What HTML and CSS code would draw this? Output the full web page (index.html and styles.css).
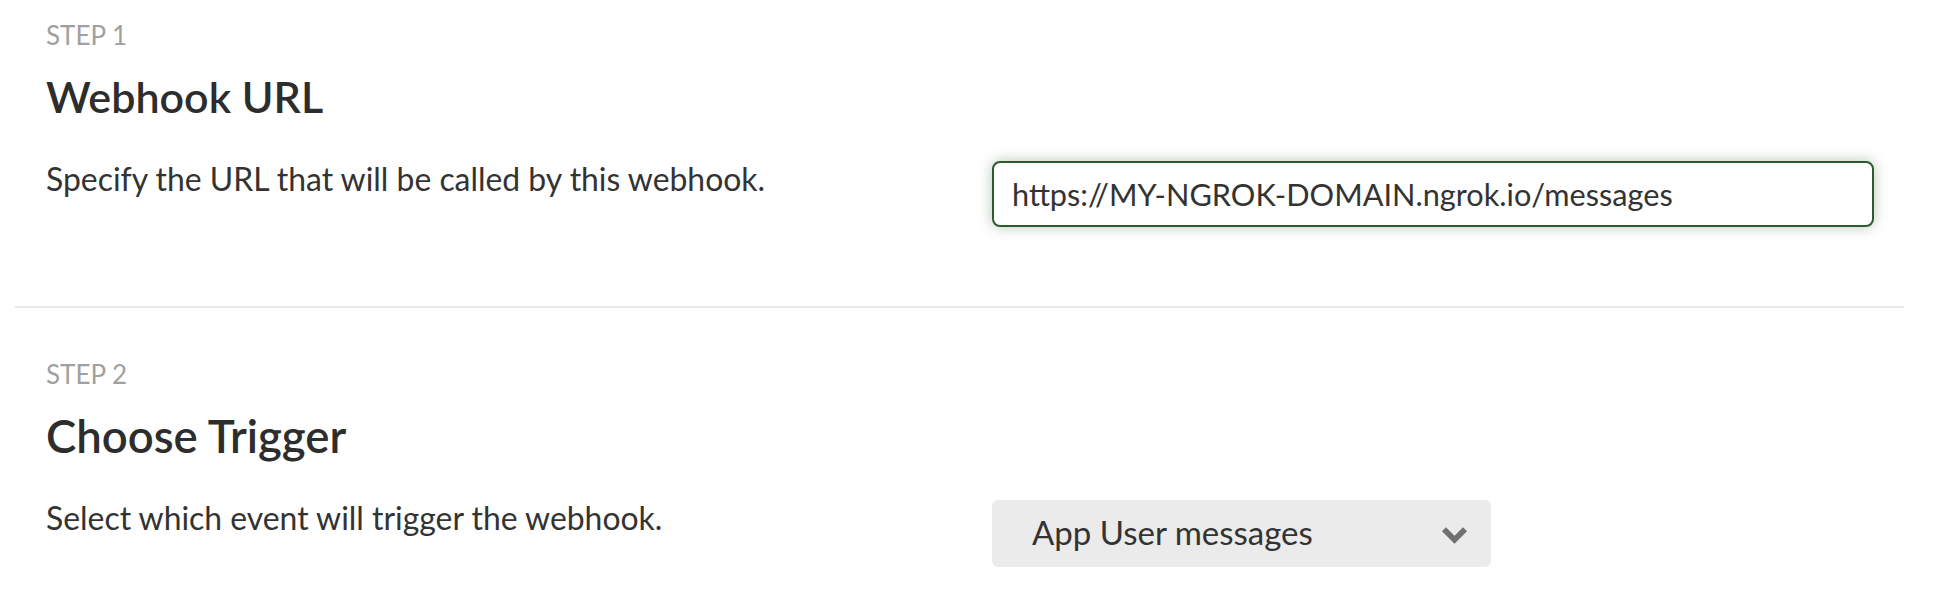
FILE: index.html
```html
<!DOCTYPE html>
<html lang="en">
<head>
<meta charset="utf-8">
<title>Webhook</title>
<link rel="stylesheet" href="styles.css">
</head>
<body>
<main class="page">
  <section class="step">
    <div class="step-label">STEP 1</div>
    <h2 class="step-title">Webhook URL</h2>
    <div class="step-row">
      <p class="step-desc">Specify the URL that will be called by this webhook.</p>
      <div class="step-control">
        <input class="url-input" type="text" value="https://MY-NGROK-DOMAIN.ngrok.io/messages">
      </div>
    </div>
  </section>
  <hr class="divider">
  <section class="step">
    <div class="step-label">STEP 2</div>
    <h2 class="step-title title-wide">Choose Trigger</h2>
    <div class="step-row">
      <p class="step-desc">Select which event will trigger the webhook.</p>
      <div class="step-control">
        <div class="select">
          <span class="select-value">App User messages</span>
          <svg class="select-chevron" width="25" height="17" viewBox="0 0 25 16.5"><polygon points="0,4 4,0 12.5,8.5 21,0 25,4 12.5,16.5" fill="#707070"/></svg>
        </div>
      </div>
    </div>
  </section>
</main>
</body>
</html>
```
FILE: styles.css
```css
html, body {
  margin: 0;
  padding: 0;
  background: #ffffff;
}
body {
  font-family: Lato, "Open Sans", sans-serif;
  color: #333333;
}
.page {
  padding: 0 39px 0 15px;
}
.step {
  padding: 23px 30px 79px 31px;
}
.divider + .step {
  padding-top: 54px;
  padding-bottom: 30px;
}
.step-label {
  font-size: 26px;
  line-height: 24px;
  color: #a0a0a0;
}
.step-title {
  margin: 29px 0 0 0;
  font-size: 43px;
  line-height: 42px;
  font-weight: 600;
  color: #2d2d2d;
}
.title-wide {
  font-size: 45.5px;
}
.step-row {
  margin-top: 43px;
  display: grid;
  grid-template-columns: 946px 882px;
  align-items: start;
}
.step-desc {
  margin: 0;
  font-size: 31.9px;
  line-height: 36px;
  color: #333333;
}
.url-input {
  box-sizing: border-box;
  width: 882px;
  height: 66px;
  border: 2px solid #2d5b2d;
  border-radius: 8px;
  padding: 0 18px;
  font-family: Lato, "Open Sans", sans-serif;
  font-size: 30.7px;
  color: #333333;
  background: #ffffff;
  box-shadow: 0 0 14px rgba(45, 91, 45, 0.35);
  outline: none;
}
.divider {
  margin: 0;
  border: 0;
  height: 2px;
  background: #e9e9e9;
}
.select {
  box-sizing: border-box;
  width: 499px;
  height: 67px;
  border-radius: 6px;
  background: #ebebeb;
  display: flex;
  align-items: center;
  justify-content: space-between;
  padding: 0 24px 4px 40px;
}
.select-value {
  font-size: 33px;
  color: #333333;
}
.select-chevron {
  display: block;
  margin-top: 7px;
}
```
